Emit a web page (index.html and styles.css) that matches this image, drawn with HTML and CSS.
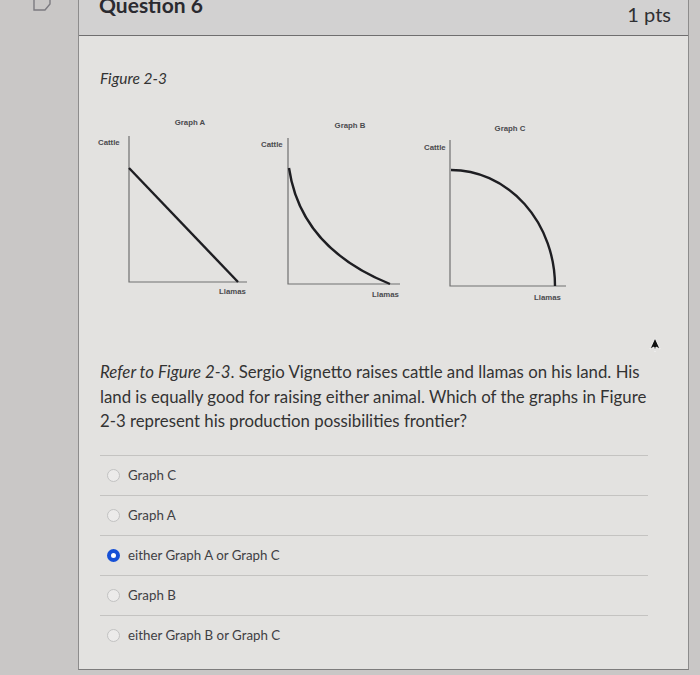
FILE: index.html
```html
<!DOCTYPE html>
<html lang="en">
<head>
<meta charset="UTF-8" />
<title>Question 6</title>
<link rel="stylesheet" href="styles.css">
</head>
<body>
<div class="page">
  <div class="gutter">
    <svg class="flag" width="20" height="14" viewBox="0 0 20 14">
      <path d="M2,-4 V10 H13 L18,4 V-4" fill="none" stroke="#7c7b80" stroke-width="1.4"/>
    </svg>
  </div>
  <div class="card">
    <div class="header">
      <div class="title">Question 6</div>
      <div class="pts">1 pts</div>
    </div>
    <div class="body">
      <div class="figure-label">Figure 2-3</div>
      <svg class="graphs" width="480" height="192" viewBox="0 0 480 192">
        <g class="lbl">
          <text x="95" y="14" text-anchor="middle">Graph A</text>
          <text x="3" y="34">Cattle</text>
          <text x="124" y="183">Llamas</text>
          <text x="255" y="17" text-anchor="middle">Graph B</text>
          <text x="166" y="36">Cattle</text>
          <text x="277" y="186">Llamas</text>
          <text x="415" y="20" text-anchor="middle">Graph C</text>
          <text x="329" y="39">Cattle</text>
          <text x="439" y="189">Llamas</text>
        </g>
        <g class="axis">
          <path d="M34,25 V171 H152"/>
          <path d="M193,27 V173 H305"/>
          <path d="M355,29 V175 H471"/>
        </g>
        <g class="curve">
          <path d="M34,57 L143,171"/>
          <path d="M194,57 C202,112 238,150 295,173"/>
          <path d="M356,59 A104,116 0 0 1 460,175"/>
        </g>
      </svg>
      <p class="question"><em>Refer to Figure 2-3</em>. Sergio Vignetto raises cattle and llamas on his land. His land is equally good for raising either animal. Which of the graphs in Figure 2-3 represent his production possibilities frontier?</p>
      <div class="answers">
        <label class="answer"><span class="radio"></span>Graph C</label>
        <label class="answer"><span class="radio"></span>Graph A</label>
        <label class="answer"><span class="radio checked"></span>either Graph A or Graph C</label>
        <label class="answer"><span class="radio"></span>Graph B</label>
        <label class="answer"><span class="radio"></span>either Graph B or Graph C</label>
      </div>
    </div>
  </div>
</div>
<svg class="cursor" width="12" height="16" viewBox="0 0 12 16">
  <path d="M6,1 L11,12 L7,10 L6,15 L5,10 L1,12 Z" fill="#111" stroke="#fff" stroke-width="0.8"/>
</svg>
</body>
</html>
```

FILE: styles.css
```css
body {
  margin: 0;
  background-color: #c9c7c6;
  font-family: Lato, "Open Sans", sans-serif;
  color: #2d2d2f;
  overflow: hidden;
}
.page {
  display: flex;
  height: 675px;
}
.gutter {
  width: 78px;
  flex: none;
}
.flag {
  display: block;
  margin-left: 32px;
}
.card {
  width: 611px;
  height: 670px;
  flex: none;
  background-color: #e3e2e0;
  border-left: 1px solid #8d8c8c;
  border-right: 1px solid #8d8c8c;
  border-bottom: 1px solid #7d7c7c;
  box-sizing: border-box;
}
.header {
  height: 35px;
  background-color: #d2d1d1;
  border-bottom: 1px solid #6f6e6f;
  display: flex;
  justify-content: space-between;
  padding: 0 17px 0 20px;
}
.title {
  font-size: 21px;
  font-weight: 700;
  line-height: 20px;
  margin-top: -5px;
  color: #2a2a30;
}
.pts {
  font-size: 20px;
  line-height: 24px;
  margin-top: 2px;
  color: #2f2f33;
}
.body {
  padding: 0 40px 0 21px;
}
.figure-label {
  font-style: italic;
  font-size: 15.5px;
  line-height: 20px;
  margin-top: 32px;
  color: #333;
}
.graphs {
  display: block;
  margin: 23px 0 0 -5px;
}
.lbl text {
  font-family: "Liberation Sans", Arial, sans-serif;
  font-size: 7.8px;
  font-weight: 700;
  fill: #4a4a4e;
}
.axis path {
  fill: none;
  stroke: #707070;
  stroke-width: 1.2;
}
.curve path {
  fill: none;
  stroke: #1e1e22;
  stroke-width: 2.4;
}
.question {
  font-size: 16.8px;
  line-height: 24.5px;
  margin: 57px 0 0;
  color: #333;
}
.answers {
  margin-top: 21px;
}
.answer {
  display: flex;
  align-items: center;
  height: 39px;
  border-top: 1px solid #c4c3c1;
  font-size: 13.3px;
  color: #404044;
}
.radio {
  width: 11px;
  height: 11px;
  border: 1px solid #c2c2c2;
  border-radius: 50%;
  background-color: #ecebea;
  margin: 0 8px 0 7px;
  flex: none;
}
.radio.checked {
  width: 5px;
  height: 5px;
  border: 4px solid #1650d6;
  background-color: #fff;
}
.cursor {
  position: absolute;
  left: 649px;
  top: 337px;
}
```
